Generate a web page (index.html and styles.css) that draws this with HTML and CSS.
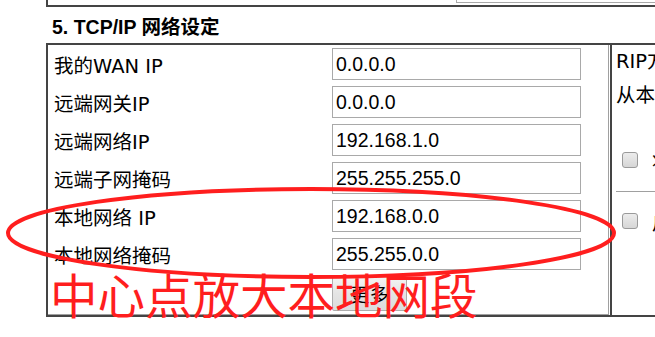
FILE: index.html
```html
<!DOCTYPE html>
<html lang="zh-CN">
<head>
    <meta charset="UTF-8">
    <meta name="viewport" content="width=device-width, initial-scale=1.0">
    <title>TCP/IP 网络设定</title>
    <link rel="stylesheet" href="styles.css">
</head>
<body>
    <div class="prev-box">
        <div class="prev-input"></div>
    </div>

    <h2 class="section-title">5. TCP/IP 网络设定</h2>

    <div class="box">
        <div class="net-panel">
            <label class="field-label">我的WAN IP</label>
            <input class="field" type="text" value="0.0.0.0">
            <label class="field-label">远端网关IP</label>
            <input class="field" type="text" value="0.0.0.0">
            <label class="field-label">远端网络IP</label>
            <input class="field" type="text" value="192.168.1.0">
            <label class="field-label">远端子网掩码</label>
            <input class="field" type="text" value="255.255.255.0">
            <label class="field-label">本地网络 IP</label>
            <input class="field" type="text" value="192.168.0.0">
            <label class="field-label">本地网络掩码</label>
            <input class="field" type="text" value="255.255.0.0">
            <span></span>
            <button class="more-btn">更多</button>
        </div>

        <div class="rip-panel">
            <div class="rip-line">RIP方向</div>
            <div class="rip-line">从本地网络到远端网络，您必须执行</div>
            <div class="check-row first">
                <span class="checkbox"></span>
                <span>将默认路由改为此VPN通道</span>
            </div>
            <div class="divider"></div>
            <div class="check-row">
                <span class="checkbox"></span>
                <span>启用 IPsec 拨出功能</span>
            </div>
        </div>
    </div>

    <svg class="markup" width="655" height="337" viewBox="0 0 655 337">
        <ellipse cx="311" cy="233" rx="303" ry="44" fill="none" stroke="#ff1e1e" stroke-width="4"/>
    </svg>
    <div class="markup-note">中心点放大本地网段</div>
</body>
</html>
```

FILE: styles.css
```css
body {
    margin: 0;
    padding: 0;
    width: 655px;
    height: 337px;
    overflow: hidden;
    position: relative;
    background-color: #fff;
    color: #000;
    font-family: "DejaVu Sans", "Noto Sans CJK SC", sans-serif;
    font-size: 19.5px;
}
.prev-box {
    margin-left: 46px;
    width: 700px;
    height: 5px;
    border-left: 2px solid #444;
    border-bottom: 2px solid #444;
}
.prev-input {
    margin-left: 408px;
    width: 260px;
    height: 2px;
    border: 1px solid #a9a9a9;
    border-top: none;
}
.section-title {
    margin: 0;
    padding: 10px 0 6px 52px;
    height: 20px;
    line-height: 20px;
    font-family: "Liberation Sans", "Noto Sans CJK SC", sans-serif;
    font-size: 19.5px;
    font-weight: bold;
}
.box {
    margin-left: 46px;
    width: 700px;
    height: 270px;
    border: 2px solid #444;
    display: flex;
}
.net-panel {
    width: 554px;
    padding: 3px 0 3px 6px;
    display: grid;
    grid-template-columns: 278px 249px;
    grid-template-rows: repeat(6, 32px) 35px;
    row-gap: 6px;
    align-items: center;
    border-right: 1px solid #a0a0a0;
    border-bottom: 1px solid #a0a0a0;
    margin-right: 1px;
}
.field-label {
    white-space: nowrap;
}
.field {
    box-sizing: border-box;
    width: 249px;
    height: 32px;
    margin: 0;
    padding: 0 3px;
    border: 1px solid #a9a9a9;
    font-family: "Liberation Sans", sans-serif;
    font-size: 19.5px;
    color: #000;
    outline: none;
}
.more-btn {
    box-sizing: border-box;
    width: 75px;
    height: 35px;
    padding: 0;
    border: 1px solid #adadad;
    border-radius: 2px;
    background: linear-gradient(#f4f4f4, #e4e4e4 50%, #dcdcdc);
    font-family: "Noto Sans CJK SC", sans-serif;
    font-size: 19.5px;
    color: #000;
}
.rip-panel {
    flex: 1;
    border-left: 2px solid #444;
    padding-left: 4px;
    white-space: nowrap;
    overflow: hidden;
}
.rip-line {
    height: 34px;
    line-height: 34px;
}
.check-row {
    display: flex;
    align-items: center;
    gap: 14px;
    height: 34px;
    padding-left: 6px;
}
.check-row.first {
    margin-top: 30px;
}
.checkbox {
    box-sizing: border-box;
    flex: none;
    width: 16px;
    height: 16px;
    border: 1px solid #9a9a9a;
    border-radius: 3px;
    background: linear-gradient(#ececec, #d6d6d6);
}
.divider {
    margin: 14px 0 12px 0;
    height: 1px;
    background-color: #a0a0a0;
}
.markup {
    position: absolute;
    left: 0;
    top: 0;
}
.markup-note {
    position: absolute;
    left: 50px;
    top: 270px;
    font-family: "Noto Sans CJK SC", sans-serif;
    font-size: 47.5px;
    font-weight: 400;
    line-height: 1;
    color: #ff1e1e;
    white-space: nowrap;
}
```
